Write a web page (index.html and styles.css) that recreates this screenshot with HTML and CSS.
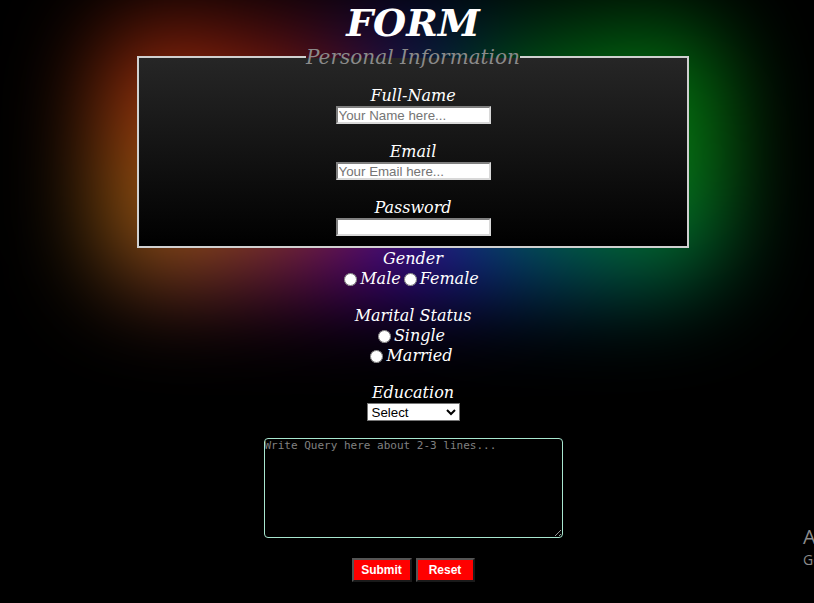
FILE: index.html
```html
<!DOCTYPE html>
<html>
<head>
<meta charset="utf-8">
<title>Form</title>
<link rel="stylesheet" href="styles.css">
</head>
<body>
<div class="page">
  <h1 class="title">FORM</h1>
  <div class="glow-wrap">
    <fieldset class="personal">
      <legend class="legend">Personal Information</legend>
      <div class="field">
        <label class="lbl" for="name">Full-Name</label>
        <input class="txt" id="name" type="text" placeholder="Your Name here...">
      </div>
      <div class="field">
        <label class="lbl" for="email">Email</label>
        <input class="txt" id="email" type="email" placeholder="Your Email here...">
      </div>
      <div class="field">
        <label class="lbl" for="pw">Password</label>
        <input class="txt" id="pw" type="password">
      </div>
    </fieldset>
  </div>
  <div class="group group-first">
    <div class="lbl">Gender</div>
    <div class="row"><input class="radio" type="radio" name="g"><span class="opt">Male</span><input class="radio" type="radio" name="g"><span class="opt">Female</span></div>
  </div>
  <div class="group">
    <div class="lbl">Marital Status</div>
    <div class="row"><input class="radio" type="radio" name="m"><span class="opt">Single</span></div>
    <div class="row"><input class="radio" type="radio" name="m"><span class="opt">Married</span></div>
  </div>
  <div class="group">
    <div class="lbl">Education</div>
    <select class="sel"><option>Select</option></select>
  </div>
  <textarea class="query" placeholder="Write Query here about 2-3 lines..."></textarea>
  <div class="buttons">
    <button class="btn btn-submit" type="submit">Submit</button>
    <button class="btn btn-reset" type="reset">Reset</button>
  </div>
</div>
<div class="watermark">
  <div class="wm-big">Activate Windows</div>
  <div class="wm-small">Go to Settings to activate Windows.</div>
</div>
</body>
</html>
```
FILE: styles.css
```css
html {
  background: #000;
}
html, body {
  margin: 0;
  padding: 0;
  overflow: hidden;
}
body {
  width: 814px;
  height: 603px;
  position: relative;
  font-family: "DejaVu Serif", Georgia, serif;
  color: #fff;
}
.page {
  position: relative;
  z-index: 0;
  padding-left: 12px;
  display: flex;
  flex-direction: column;
  align-items: center;
}
.title {
  margin: 0;
  font-size: 38px;
  font-style: italic;
  font-weight: bold;
  line-height: 45px;
  height: 45px;
}
.glow-wrap {
  position: relative;
  width: 552px;
}
.glow-wrap::before {
  content: "";
  position: absolute;
  left: -40px;
  right: -40px;
  top: -30px;
  bottom: -45px;
  z-index: -1;
  background: conic-gradient(from 0deg at 50% 50%,
    #0a1060 0deg,
    #001a50 12deg,
    #003020 40deg,
    #004a10 56deg,
    #006a10 72deg,
    #0a8010 90deg,
    #006a30 110deg,
    #005070 125deg,
    #0a2a90 146deg,
    #2a10a0 170deg,
    #4000a0 188deg,
    #600080 210deg,
    #701050 228deg,
    #7a2a30 240deg,
    #8a5010 252deg,
    #8a5a10 258deg,
    #a04a10 270deg,
    #8a2008 290deg,
    #500a10 308deg,
    #3a0828 322deg,
    #280a50 338deg,
    #140a60 350deg,
    #0a1060 360deg);
  filter: blur(45px);
  border-radius: 60px;
}
.personal {
  margin: 0;
  padding: 17px 0 10px;
  border: 2px solid #d0d0d0;
  background: linear-gradient(#262626, #000);
  display: flex;
  flex-direction: column;
  align-items: center;
}
.legend {
  font-size: 20px;
  font-style: italic;
  color: #8a8a8a;
  padding: 0;
  margin: 0 auto;
  line-height: 24px;
}
.field {
  display: flex;
  flex-direction: column;
  align-items: center;
  margin-bottom: 18px;
}
.field:last-child { margin-bottom: 0; }
.lbl {
  font-size: 16px;
  font-style: italic;
  line-height: 20px;
  color: #fff;
  text-align: center;
}
.txt {
  width: 155px;
  height: 18px;
  box-sizing: border-box;
  border: 2px solid;
  border-color: #808080 #d8d8d8 #d8d8d8 #808080;
  padding: 0 1px;
  font-family: "Liberation Sans", Arial, sans-serif;
  font-size: 13.333px;
  background: #fff;
  color: #000;
}
.txt::placeholder { color: #757575; }
.group {
  display: flex;
  flex-direction: column;
  align-items: center;
  margin-bottom: 17px;
}
.group-first { margin-top: 1px; }
.row {
  display: flex;
  align-items: center;
  height: 20px;
}
.radio {
  width: 13px;
  height: 13px;
  margin: 0 3px 0 0;
}
.opt {
  font-size: 16px;
  font-style: italic;
  line-height: 20px;
  margin-right: 3px;
}
.sel {
  width: 93px;
  height: 18px;
  font-family: "Liberation Sans", Arial, sans-serif;
  font-size: 13.333px;
  background: #fff;
  color: #000;
  border: 1px solid #767676;
  padding: 0;
}
.query {
  width: 299px;
  height: 100px;
  box-sizing: border-box;
  background: #000;
  border: 1px solid #a8e6cf;
  border-radius: 4px;
  padding: 0;
  color: #fff;
  font-family: "DejaVu Sans Mono", monospace;
  font-size: 11px;
  resize: both;
}
.query::placeholder { color: #808080; }
.buttons {
  display: flex;
  gap: 4px;
  margin-top: 20px;
}
.btn {
  height: 24px;
  padding: 0;
  background: #f00;
  color: #fff;
  font-family: "Liberation Sans", Arial, sans-serif;
  font-weight: bold;
  font-size: 12px;
  border: 2px solid;
  border-color: #555 #1a1a1a #1a1a1a #555;
}
.btn-submit { width: 60px; }
.btn-reset { width: 59px; }
.watermark {
  position: absolute;
  left: 803px;
  top: 524px;
  color: #8c8c8c;
  font-family: "Open Sans", "Noto Sans", sans-serif;
  white-space: nowrap;
}
.wm-big { font-size: 20px; line-height: 26px; }
.wm-small { font-size: 14px; line-height: 20px; }
```
